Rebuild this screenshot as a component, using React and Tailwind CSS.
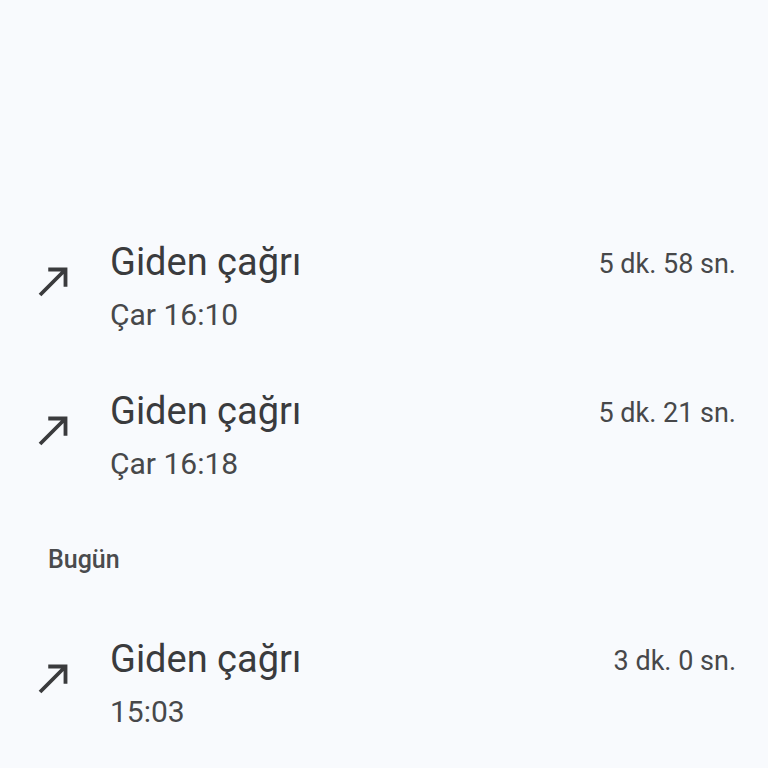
import React from 'react';

const calls = [
  { title: 'Giden çağrı', time: 'Çar 16:10', duration: '5 dk. 58 sn.' },
  { title: 'Giden çağrı', time: 'Çar 16:18', duration: '5 dk. 21 sn.' },
];

const today = [{ title: 'Giden çağrı', time: '15:03', duration: '3 dk. 0 sn.' }];

function CallMade() {
  return (
    <svg viewBox="0 0 24 24" className="w-[46px] h-[46px] shrink-0 mt-[20px]" fill="#3a3b3d">
      <path d="M9 5v2h6.59L4 18.59 5.41 20 17 8.41V15h2V5z" />
    </svg>
  );
}

function CallRow({ call }) {
  return (
    <div className="flex items-start pl-[31px] pr-8 py-[26px]">
      <CallMade />
      <div className="ml-[33px] flex-1">
        <div className="text-[38px] leading-[48px] text-[#3a3b3d]">{call.title}</div>
        <div className="mt-[9px] text-[30px] leading-[40px] text-[#47484a]">{call.time}</div>
      </div>
      <div className="mt-[8px] text-[27px] leading-[36px] text-[#47484a]">{call.duration}</div>
    </div>
  );
}

export default function App() {
  return (
    <div
      className="w-[768px] h-[768px] overflow-hidden bg-[#f8fafd] pt-[212px]"
      style={{ fontFamily: 'Roboto, "Noto Sans", sans-serif' }}
    >
      {calls.map((c, i) => (
        <CallRow key={i} call={c} />
      ))}
      <div className="pl-[48px] pt-[33px] pb-[32px] text-[25px] leading-[34px] font-medium text-[#4a4b4d]">
        Bugün
      </div>
      {today.map((c, i) => (
        <CallRow key={i} call={c} />
      ))}
    </div>
  );
}
